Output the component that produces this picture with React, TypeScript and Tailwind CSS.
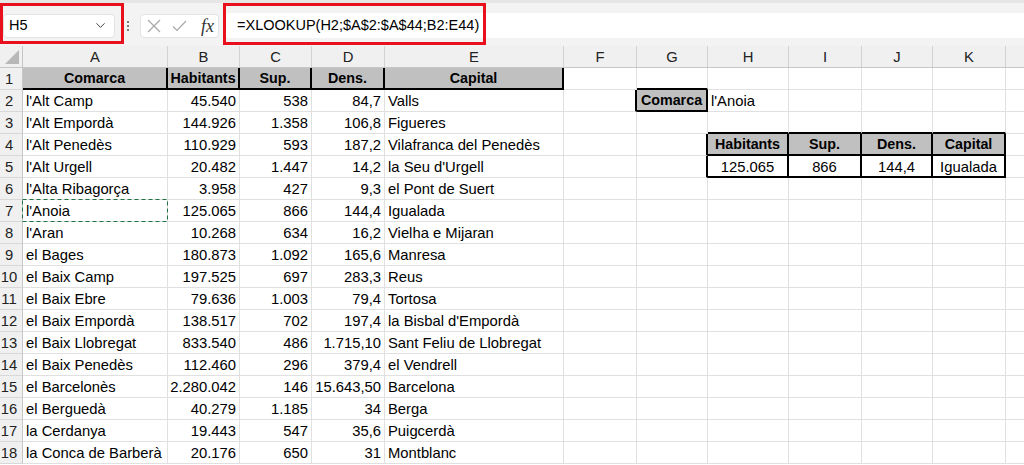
import { ChevronDown } from "lucide-react";

type Row = string[];

const widths = [145, 72, 72, 73, 179, 73, 71, 81, 73, 71, 73];
const letters = ["A", "B", "C", "D", "E", "F", "G", "H", "I", "J", "K"];

const data: Row[] = [
  ["l'Alt Camp", "45.540", "538", "84,7", "Valls"],
  ["l'Alt Empordà", "144.926", "1.358", "106,8", "Figueres"],
  ["l'Alt Penedès", "110.929", "593", "187,2", "Vilafranca del Penedès"],
  ["l'Alt Urgell", "20.482", "1.447", "14,2", "la Seu d'Urgell"],
  ["l'Alta Ribagorça", "3.958", "427", "9,3", "el Pont de Suert"],
  ["l'Anoia", "125.065", "866", "144,4", "Igualada"],
  ["l'Aran", "10.268", "634", "16,2", "Vielha e Mijaran"],
  ["el Bages", "180.873", "1.092", "165,6", "Manresa"],
  ["el Baix Camp", "197.525", "697", "283,3", "Reus"],
  ["el Baix Ebre", "79.636", "1.003", "79,4", "Tortosa"],
  ["el Baix Empordà", "138.517", "702", "197,4", "la Bisbal d'Empordà"],
  ["el Baix Llobregat", "833.540", "486", "1.715,10", "Sant Feliu de Llobregat"],
  ["el Baix Penedès", "112.460", "296", "379,4", "el Vendrell"],
  ["el Barcelonès", "2.280.042", "146", "15.643,50", "Barcelona"],
  ["el Berguedà", "40.279", "1.185", "34", "Berga"],
  ["la Cerdanya", "19.443", "547", "35,6", "Puigcerdà"],
  ["la Conca de Barberà", "20.176", "650", "31", "Montblanc"],
];

type CellSpec = {
  text?: string;
  align?: "left" | "right" | "center";
  head?: boolean;
  r?: boolean; // black right border
  b?: boolean; // black bottom border
};

// builds the 11 cells (A..K) of a sheet row
function buildRow(n: number): CellSpec[] {
  const cells: CellSpec[] = letters.map(() => ({}));
  if (n === 1) {
    ["Comarca", "Habitants", "Sup.", "Dens.", "Capital"].forEach((t, i) => {
      cells[i] = { text: t, align: "center", head: true, r: true, b: true };
    });
    cells[6] = { b: true };
    return cells;
  }
  const d = data[n - 2];
  cells[0] = { text: d[0], align: "left" };
  cells[1] = { text: d[1], align: "right" };
  cells[2] = { text: d[2], align: "right" };
  cells[3] = { text: d[3], align: "right" };
  cells[4] = { text: d[4], align: "left" };
  if (n === 2) {
    cells[5] = { r: true };
    cells[6] = { text: "Comarca", align: "center", head: true, r: true, b: true };
    cells[7] = { text: "l'Anoia", align: "left" };
  }
  if (n === 3) {
    for (let i = 7; i <= 10; i++) cells[i] = { b: true };
  }
  if (n === 4) {
    cells[6] = { r: true };
    ["Habitants", "Sup.", "Dens.", "Capital"].forEach((t, i) => {
      cells[7 + i] = { text: t, align: "center", head: true, r: true, b: true };
    });
  }
  if (n === 5) {
    cells[6] = { r: true };
    ["125.065", "866", "144,4", "Igualada"].forEach((t, i) => {
      cells[7 + i] = { text: t, align: "center", r: true, b: true };
    });
  }
  return cells;
}

function Cell({ spec, width, marked }: { spec: CellSpec; width: number; marked?: boolean }) {
  return (
    <div
      style={{ width }}
      className={[
        "relative flex h-[22px] shrink-0 items-center overflow-visible whitespace-nowrap px-[3px] pt-[2px]",
        spec.r ? "border-r-2 border-r-black" : "border-r border-r-[#e0e0e0]",
        spec.b ? "border-b-2 border-b-black" : "border-b border-b-[#e0e0e0]",
        spec.head ? "bg-[#c0c0c0] text-[14.3px] font-bold" : "bg-white text-[14.8px]",
        spec.align === "right" ? "justify-end" : spec.align === "center" ? "justify-center" : "justify-start",
      ].join(" ")}
    >
      {spec.text}
      {marked && (
        <svg className="pointer-events-none absolute -top-px -left-px h-[23px] w-[146px]" viewBox="0 0 146 23">
          <rect x="0.5" y="0.5" width="145" height="22" fill="none" stroke="#217346" strokeWidth="1" strokeDasharray="4 3" />
        </svg>
      )}
    </div>
  );
}

export default function App() {
  const rows = Array.from({ length: 18 }, (_, i) => i + 1);

  return (
    <div className="h-[465px] w-[1024px] overflow-hidden bg-white font-['Liberation_Sans',Arial,sans-serif] text-black">
      {/* formula bar */}
      <div className="relative flex h-[46px] items-center border-t-[3px] border-t-[#e6e6e6] bg-[#f3f3f3] pt-[2px]">
        <div className="ml-[3px] flex h-[24px] w-[112px] items-center justify-between rounded-[4px] border border-[#e3e3e3] bg-white pr-[6px] pl-[5px] text-[14.5px]">
          <span>H5</span>
          <ChevronDown size={15} strokeWidth={1.6} className="text-[#444]" />
        </div>
        <div className="flex w-[25px] flex-col items-center gap-[2px]">
          <span className="h-[2px] w-[2px] rounded-full bg-[#555]" />
          <span className="h-[2px] w-[2px] rounded-full bg-[#555]" />
          <span className="h-[2px] w-[2px] rounded-full bg-[#555]" />
        </div>
        <div className="flex h-[24px] w-[79px] items-center rounded-[4px] border border-[#e3e3e3] bg-white pl-[6px]">
          <svg width="14" height="14" viewBox="0 0 14 14" className="mr-[11px]">
            <path d="M1 1L13 13M13 1L1 13" stroke="#a8a8a8" strokeWidth="1.2" />
          </svg>
          <svg width="15" height="12" viewBox="0 0 15 12" className="mr-[14px]">
            <path d="M1 6.5L5 10.5L14 1" stroke="#a8a8a8" strokeWidth="1.2" fill="none" />
          </svg>
          <span className="font-['Liberation_Serif',serif] text-[18px] leading-none text-[#333] italic">fx</span>
        </div>
        <div className="ml-[6px] flex h-[25px] flex-1 items-center rounded-l-[4px] bg-white pl-[12px] text-[14.5px]">
          =XLOOKUP(H2;$A$2:$A$44;B2:E44)
        </div>
        {/* red annotation frames */}
        <div className="pointer-events-none absolute top-0 left-0 h-[41px] w-[124px] border-[3px] border-[#e8101c]" />
        <div className="pointer-events-none absolute top-0 left-[223px] h-[42px] w-[263px] border-[3px] border-[#e8101c]" />
      </div>

      {/* column headers */}
      <div className="flex h-[22px] border-b border-[#c6c6c6] bg-[#f0f0f0]">
        <div className="relative h-full w-[23px] shrink-0 border-r border-[#c6c6c6]">
          <svg width="14" height="14" viewBox="0 0 14 14" className="absolute right-[3px] bottom-[3px]">
            <path d="M14 0L14 14L0 14Z" fill="#b8b8b8" />
          </svg>
        </div>
        {letters.map((l, i) => (
          <div
            key={l}
            style={{ width: widths[i] }}
            className="flex shrink-0 items-center justify-center border-r border-[#d2d2d2] pt-[1px] text-[14.8px] text-[#222]"
          >
            {l}
          </div>
        ))}
        <div className="flex-1" />
      </div>

      {/* sheet rows */}
      {rows.map((n) => {
        const cells = buildRow(n);
        return (
          <div key={n} className="flex">
            <div className="flex h-[22px] w-[23px] shrink-0 items-center justify-center border-r border-b border-r-[#c6c6c6] border-b-[#d8d8d8] bg-[#f0f0f0] pt-[2px] pr-[4px] text-[14.8px] text-[#222]">
              {n}
            </div>
            {cells.map((c, i) => (
              <Cell key={i} spec={c} width={widths[i]} marked={n === 7 && i === 0} />
            ))}
            <div className="h-[22px] flex-1 border-b border-[#e0e0e0]" />
          </div>
        );
      })}
    </div>
  );
}
